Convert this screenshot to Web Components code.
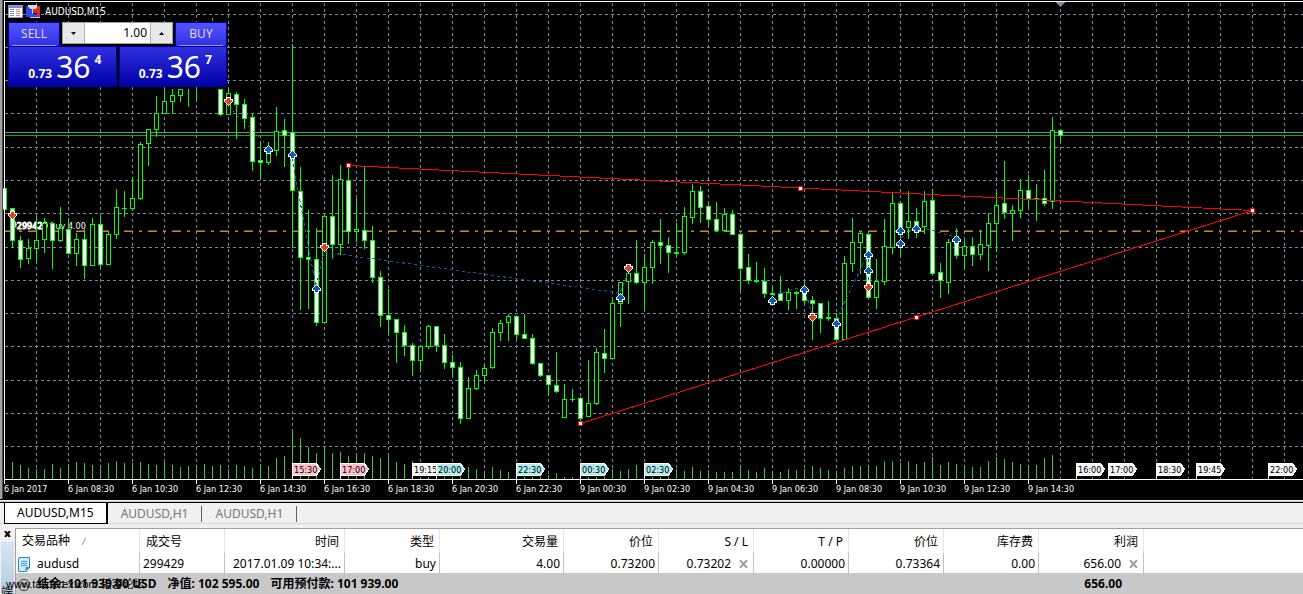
<!DOCTYPE html>
<html lang="zh-CN">
<head>
<meta charset="utf-8">
<title>AUDUSD,M15</title>
<style>
  html, body { margin: 0; height: 100%; }
  body { overflow: hidden; background: #f0f0f0; font: 12px/16px "Noto Sans", "Noto Sans CJK SC", sans-serif; color: #000; }
</style>
</head>
<body>
<trading-app></trading-app>
<script>
const DASH = '3 3';
const px = n => n + 0.5;

/* x, high, body top, body bottom, low, kind: w = filled, h = hollow, d = doji, l = wick only */
const CANDLES = `4 188 188 209 209 w|12 208 208 240 247 w|20 236 240 259 267 w|28 239 248 258 263 h|36 216 240 248 262 h|44 218 223 239 252 h|52 222 223 240 268 w|60 207 228 240 241 h|68 218 229 253 253 w|76 233 239 253 265 h|84 229 239 265 278 w|92 218 224 265 265 h|100 216 224 264 266 w|108 231 234 264 264 h|116 189 207 234 238 h|124 191 208 208 216 d|132 177 198 208 210 h|140 142 144 198 199 h|148 129 129 143 165 h|156 96 113 129 136 h|164 89 101 113 113 h|172 89 95 101 113 h|180 89 89 95 101 h|188 89 89 89 106 l|196 89 89 89 100 l|212 18 18 18 20 l|220 89 89 114 115 w|228 89 93 114 114 h|236 92 94 104 138 w|244 99 104 118 128 w|252 113 117 161 170 w|260 141 160 162 178 w|268 142 150 162 164 h|276 107 131 150 155 h|284 119 130 135 166 w|292 44 132 190 247 w|300 167 191 257 309 w|308 210 257 259 308 w|316 228 259 322 325 w|324 214 216 322 322 h|332 175 216 244 258 w|340 165 179 244 254 h|348 168 180 231 243 w|356 198 229 231 241 h|364 167 230 240 248 w|372 226 240 277 282 w|380 271 277 315 326 w|388 289 315 319 334 w|396 319 319 332 362 w|404 325 332 345 355 w|412 343 345 360 375 w|420 345 346 360 371 h|428 325 326 346 348 h|436 326 326 345 351 w|444 334 345 362 368 w|452 355 362 367 375 w|460 362 367 418 423 w|468 377 388 418 418 h|476 370 375 388 389 h|484 364 368 375 381 h|492 328 332 367 368 h|500 320 323 332 340 h|508 314 316 322 340 h|516 316 316 334 338 w|524 314 334 338 338 w|532 334 338 363 364 w|540 363 363 375 376 w|548 375 375 384 395 w|556 352 385 391 392 w|564 384 399 417 417 h|572 389 399 399 401 d|580 397 398 418 421 w|588 360 403 416 416 h|596 348 352 403 404 h|604 329 353 358 372 w|612 299 303 358 358 h|620 282 282 303 326 h|628 273 273 281 303 h|636 240 273 282 283 w|644 254 267 282 309 h|652 240 242 267 283 h|660 219 242 245 263 w|668 237 245 252 272 w|676 223 252 253 255 d|684 207 216 252 254 h|692 184 191 217 223 h|700 186 191 207 222 w|708 203 206 219 225 w|716 202 219 230 231 w|724 208 214 230 231 h|732 210 214 234 234 w|740 234 234 268 290 w|748 254 267 280 283 w|756 262 280 281 282 d|764 268 281 293 297 w|772 287 293 294 298 d|780 276 293 300 300 w|788 288 292 300 309 h|796 291 292 293 308 d|804 282 291 300 303 w|812 296 300 303 339 w|820 303 303 318 332 w|828 301 317 318 320 d|836 313 318 339 341 w|844 256 263 339 339 h|852 218 242 263 271 h|860 231 233 242 273 h|868 233 234 297 297 w|876 259 281 297 308 h|884 219 246 281 284 h|892 193 203 247 253 h|900 201 203 228 255 w|908 191 221 227 238 h|916 208 221 228 237 w|924 191 201 226 233 h|932 189 200 273 273 w|940 263 272 280 297 w|948 239 242 282 293 h|956 228 236 255 258 w|964 239 246 255 268 h|972 237 246 254 265 w|980 230 244 254 259 h|988 213 223 245 270 h|996 192 205 223 251 h|1004 161 203 212 218 w|1012 205 210 213 240 h|1020 179 190 210 217 h|1028 175 190 198 206 w|1036 184 198 198 220 d|1044 170 198 203 205 w|1052 117 130 201 208 h|1060 130 130 135 141 w`
  .split('|').map(r => r.split(' '));

/* tick volumes: the top of each bar, one every 8px from x = 12 */
const VOLUMES = [462,465,468,469,469,464,468,464,462,463,465,468,463,461,463,463,462,464,465,462,465,467,466,465,464,466,465,469,465,466,468,464,466,458,456,432,438,447,453,447,453,452,456,456,453,456,458,456,462,464,461,477,477,477,477,477,477,467,469,473,467,470,472,477,477,477,477,475,473,477,477,477,477,477,477,469,471,469,465,477,477,477,477,469,471,467,471,470,472,472,472,468,470,472,468,472,472,469,470,469,466,468,470,471,468,466,466,465,466,461,461,463,461,464,462,457,465,462,464,467,467,467,461,457,459,462,464,465,465,458,455,478];

const H_GRID = [14,47,80,113,147,180,213,247,280,313,346,380,413,446];
const TIMES = ['6 Jan 2017','6 Jan 08:30','6 Jan 10:30','6 Jan 12:30','6 Jan 14:30','6 Jan 16:30','6 Jan 18:30','6 Jan 20:30','6 Jan 22:30','9 Jan 00:30','9 Jan 02:30','9 Jan 04:30','9 Jan 06:30','9 Jan 08:30','9 Jan 10:30','9 Jan 12:30','9 Jan 14:30'];
const EVENTS = [[292,'15:30','#ffc0cb'],[340,'17:00','#ffc0cb'],[412,'19:15','#f5f5f5'],[436,'20:00','#afeeee'],[516,'22:30','#afeeee'],[580,'00:30','#afeeee'],[644,'02:30','#afeeee'],[1076,'16:00','#f5f5f5'],[1108,'17:00','#f5f5f5'],[1156,'18:30','#f5f5f5'],[1196,'19:45','#f5f5f5'],[1268,'22:00','#f5f5f5']];
const SELLS = [[12,215],[228,101],[324,247],[628,268],[812,317],[868,287]];
const BUYS = [[268,150],[292,155],[316,289],[620,298],[772,301],[804,290],[836,324],[868,255],[868,271],[900,231],[900,244],[916,229],[956,240]];
const HANDLES = [[348,165],[800,188],[1252,210],[580,423],[916,317]];

class PriceChart extends HTMLElement {
  constructor() {
    super();
    const s = [];
    for (let x = 36; x < 2600; x += 32) s.push(`<path class="grid" d="M${px(x)} 3V479"/>`);
    for (const y of H_GRID) s.push(`<line class="grid" x1="5" x2="100%" y1="${px(y)}" y2="${px(y)}"/>`);
    VOLUMES.forEach((y, i) => s.push(`<rect fill="#32cd32" x="${12 + i * 8}" y="${y}" width="1" height="${479 - y}"/>`));
    s.push(`<rect x="5" y="132" width="100%" height="1" fill="#778899"/><rect x="5" y="135" width="100%" height="1" fill="#00b400"/>`);
    s.push(`<line x1="4" x2="100%" y1="231.5" y2="231.5" stroke="#32cd32" stroke-dasharray="9 6 3 6"/>`);
    s.push(`<line x1="4" x2="100%" y1="230.5" y2="230.5" stroke="#f00" stroke-dasharray="9 6 3 6"/>`);
    s.push(`<text x="10" y="229" fill="#fff"><tspan stroke="#fff" stroke-width="1">#299429</tspan> buy 4.00</text>`);
    for (const [x, hi, top, bot, lo, kind] of CANDLES) {
      const X = +x, T = +top, B = +bot;
      s.push(`<rect x="${X}" y="${hi}" width="1" height="${lo - hi + 1}" fill="#0f0"/>`);
      if (kind === 'l') continue;
      s.push(`<rect x="${X - 2}" y="${T}" width="5" height="${B - T + 1}" fill="#0f0"/>`);
      if (kind !== 'd') s.push(`<rect x="${X - 1}" y="${T + 1}" width="3" height="${B - T - 1}" fill="${kind === 'w' ? '#fff' : '#000'}"/>`);
    }
    s.push(`<g fill="none" stroke="#0a5caf" stroke-dasharray="3 3"><path d="M292 158L316 287L324 252L620 293L628 273M772 296L804 286L812 315M836 320L868 254V285M900 241L900 232M901 238L916 226L956 237"/></g>`);
    s.push(`<path d="M228 106L268 146" fill="none" stroke="#e04020" stroke-dasharray="2 5"/>`);
    s.push(`<path d="M348.5 165.5L1252.5 210.5L580.5 423.5" fill="none" stroke="#f00"/>`);
    for (const [x, y] of SELLS) s.push(`<path transform="translate(${x} ${y})" fill="#e0401c" stroke="#fff" d="M-1.500-3.500H2.500V-1.500H4.500V.500L.500 4.500L-3.500.500V-1.500H-1.500Z"/>`);
    for (const [x, y] of BUYS) s.push(`<path transform="translate(${x} ${y})" fill="#0a5caf" stroke="#fff" d="M-1.500 3.500H2.500V1.500H4.500V-.500L.500-4.500L-3.500-.500V1.500H-1.500Z"/>`);
    for (const [x, y] of HANDLES) s.push(`<rect x="${x - 2}" y="${y - 2}" width="5" height="5" fill="#f00"/><rect x="${x - 1}" y="${y - 1}" width="3" height="3" fill="#fff"/>`);
    for (const [x, t, c] of EVENTS) s.push(`<path fill="#fff" d="M${x} 463H${x + 25}L${x + 29} 469L${x + 25} 476H${x + 1}V479H${x}Z"/><path fill="${c}" d="M${x + 1} 464H${x + 24}L${x + 28} 469L${x + 24} 475H${x + 1}Z"/><text x="${x + 2}" y="473">${t}</text>`);
    s.push(`<path fill="#fff" d="M4 1H5V484H4Z"/><rect fill="#fff" x="4" y="1" width="100%" height="1"/><rect fill="#fff" x="4" y="479" width="100%" height="1"/>`);
    TIMES.forEach((t, i) => s.push(`<rect x="${4 + i * 64}" y="479" width="1" height="5" fill="#fff"/><text x="${4 + i * 64}" y="492" fill="#fff">${t}</text>`));
    s.push(`<path fill="#778899" d="M1056 2H1065L1061 7H1060Z"/>`);
    s.push(`<rect x="8" y="5" width="14" height="12" fill="#fff" stroke="#8c9ccf"/><path d="M8 6.500H22" stroke="#6f8fe0" stroke-width="2"/><path d="M10 9.500H14M10 11.500H14M10 13.500H14M10 15.500H14" stroke="#7d93d8"/><path d="M16 9.500H20M16 11.500H20M16 13.500H20M16 15.500H20" stroke="#e08c78"/>`);
    s.push(`<path d="M26 6H31L32 9V14H37V17H26Z" fill="#2848e8"/><path d="M35 6H40V17H37V13H33V9Z" fill="#d83028"/><path d="M28 5H37V7L35 9H30L28 7Z" fill="#d8d8d8"/><path d="M32.500 8V14M30 17.500H40" stroke="#c8c8d8" fill="none"/>`);
    s.push(`<text x="45" y="15" fill="#fff" style="font-size:10px">AUDUSD,M15</text>`);
    this.attachShadow({ mode: 'open' }).innerHTML = `
      <style>
        :host { display: block; height: 499px; background: #000; border-bottom: 1px solid #000; }
        svg { display: block; width: 100%; height: 100%; shape-rendering: crispEdges; font: 9px "DejaVu Sans Condensed", "Noto Sans", sans-serif; }
        .grid { stroke: #778899; stroke-dasharray: ${DASH}; fill: none; }
      </style>
      <svg role="img" aria-label="AUDUSD M15 chart">${s.join('')}<rect width="2" height="100%" fill="#a0a0a0"/><rect x="2" width="1" height="100%" fill="#505050"/></svg>`;
  }
}
customElements.define('price-chart', PriceChart);

class PriceQuote extends HTMLElement {
  constructor() {
    super();
    this.attachShadow({ mode: 'open' }).innerHTML = `
      <style>
        :host { display: block; }
        button { box-sizing: border-box; display: flex; align-items: baseline; justify-content: center; gap: 4px; width: 100%; height: 41px; padding: 0 0 0 5px; border: 1px solid #0000a0; background: linear-gradient(#3030e0, #0000a8); color: #fff; font: bold 12px/40px "Noto Sans", sans-serif; }
        big { font: 30px/40px "Noto Sans", sans-serif; }
        sup { position: relative; top: -14px; font-size: 12px; line-height: 12px; vertical-align: baseline; }
      </style>
      <button type="button"><slot></slot><big><slot name="pips"></slot></big><sup><slot name="point"></slot></sup></button>`;
  }
}
customElements.define('price-quote', PriceQuote);

class TradePanel extends HTMLElement {
  constructor() {
    super();
    this.attachShadow({ mode: 'open' }).innerHTML = `
      <style>
        :host { display: block; width: 219px; }
        .top { display: grid; grid-template-columns: 52px minmax(0, 1fr) 52px; gap: 2px; height: 24px; background: #000; }
        .side { box-sizing: border-box; height: 24px; padding: 0 3px; border: 1px solid #0000a0; border-bottom: 0; background: linear-gradient(#5454ff, #3030e0); color: #dcdcff; font: 12px/22px "Noto Sans", sans-serif; }
        .side span { display: block; height: 22px; border-bottom: 1px solid #9c9cf4; }
        .lot { box-sizing: border-box; display: flex; height: 22px; border: 1px solid #a0a0a0; background: #fff; }
        .lot button { display: flex; align-items: center; justify-content: center; width: 21px; padding: 0; border: 0; background: #e8e8e8; flex: none; }
        input { flex: 1; min-width: 0; padding: 0 3px; border: solid #b0b0b0; border-width: 0 1px; text-align: right; font: 12px/20px "Noto Sans", sans-serif; outline: 0; }
        .prices { display: grid; grid-template-columns: 1fr 1fr; gap: 2px; background: #000; }
      </style>
      <div class="top">
        <button class="side" type="button"><span>SELL</span></button>
        <div class="lot"><button type="button" aria-label="less"><svg width="5" height="3"><path d="M0 0H5L2.500 3Z"/></svg></button><input aria-label="Volume" value="1.00"><button type="button" aria-label="more"><svg width="5" height="3"><path d="M0 3H5L2.500 0Z"/></svg></button></div>
        <button class="side" type="button"><span>BUY</span></button>
      </div>
      <div class="prices">
        <price-quote>0.73<span slot="pips">36</span><span slot="point">4</span></price-quote>
        <price-quote>0.73<span slot="pips">36</span><span slot="point">7</span></price-quote>
      </div>`;
  }
}
customElements.define('trade-panel', TradePanel);

class ChartTabs extends HTMLElement {
  constructor() {
    super();
    this.attachShadow({ mode: 'open' }).innerHTML = `
      <style>
        :host { display: flex; height: 21px; margin: 2px 0 0; padding-left: 4px; border-top: 1px solid #000; background: #f0f0f0; box-shadow: 0 -1px #c8c8c8, inset 0 -1px #d8d8d8; }
        ::slotted(button) { box-sizing: border-box; height: 16px; margin: 3px 0 0; padding: 0 13px; border: 0; border-right: 1px solid #606060; background: none; color: #787878; font: 12px/16px "Noto Sans", sans-serif; }
        ::slotted(button[aria-selected=true]) { height: 21px; margin: 0; padding: 0 12px; border: 1px solid #000; border-top: 0; border-right-width: 2px; background: #fff; color: #000; line-height: 20px; }
      </style>
      <slot></slot>`;
  }
  connectedCallback() { this.setAttribute('role', 'tablist'); }
}
customElements.define('chart-tabs', ChartTabs);

class TradeTerminal extends HTMLElement {
  constructor() {
    super();
    const X = '<button type="button" aria-label="close"><svg width="9" height="8"><path d="M1 0L8 8M8 0L1 8" stroke="#a0a0a0" stroke-width="2"/></svg></button>';
    this.attachShadow({ mode: 'open' }).innerHTML = `
      <style>
        :host { position: relative; display: flex; flex: 1; min-height: 0; overflow: hidden; margin-top: 4px; }
        aside { box-sizing: border-box; width: 15px; flex: none; display: flex; flex-direction: column; padding: 0 1px; align-items: center; }
        aside button { display: flex; align-items: center; justify-content: center; width: 12px; height: 12px; padding: 0; border: 0; background: none; margin-bottom: 2px; }
        aside div { width: 13px; flex: 1; background: linear-gradient(#d8e6f4, #b4c8dc); overflow: hidden; display: flex; align-items: flex-end; }
        aside b { font: 12px/12px "Noto Sans CJK SC", sans-serif; height: 8px; }
        main { flex: 1; background: #fff; border-top: 1px solid #a0a0a0; border-left: 1px solid #a0a0a0; min-width: 0; overflow: hidden; }
        table { width: 100%; table-layout: fixed; border-collapse: separate; border-spacing: 0; }
        th, td { box-sizing: border-box; padding: 0 3px; text-align: right; white-space: nowrap; overflow: hidden; border-right: 1px solid #c0c0c0; font-weight: 400; }
        th { height: 24px; padding: 1px 5px 0; border-color: #e5e5e5; }
        td { height: 20px; padding-top: 2px; }
        th:last-child, td:last-child { border: 0; }
        .l { text-align: left; padding-left: 6px; }
        td.l { padding-left: 2px; }
        td.l + .l { padding-left: 3px; }
        th i { color: #808080; font-size: 9px; margin-left: 12px; }
        td svg { vertical-align: middle; }
        td button { padding: 0; border: 0; background: none; margin: 0 2px 0 8px; height: 12px; line-height: 0; }
        tfoot td { height: 22px; padding: 0 3px; background: #c8c8c8; border: 0; font-weight: 700; }
        tfoot .sum { padding: 0 0 0 2px; text-align: left; }
        .sum span { margin-right: 11px; }
        .sum svg { margin-right: 7px; }
        tfoot .p { padding-right: 22px; }
        .mark { position: absolute; left: 6px; bottom: 3px; font: 11px/14px "Liberation Sans", "Noto Sans CJK SC", sans-serif; }
      </style>
      <aside><button type="button" aria-label="close panel"><svg width="7" height="6"><path d="M1 0L6 6M6 0L1 6" stroke="#000" stroke-width="2"/></svg></button><div><b>端</b></div></aside>
      <main><table>
        <colgroup><col style="width:124px"><col style="width:85px"><col style="width:120px"><col style="width:95px"><col style="width:124px"><col style="width:95px"><col style="width:95px"><col style="width:95px"><col style="width:95px"><col style="width:95px"><col style="width:105px"><col></colgroup>
        <thead><tr><th class="l">交易品种<i>/</i></th><th class="l">成交号</th><th>时间</th><th>类型</th><th>交易量</th><th>价位</th><th>S / L</th><th>T / P</th><th>价位</th><th>库存费</th><th>利润</th><th></th></tr></thead>
        <tbody><tr><td class="l"><svg width="12" height="15" style="margin-right:7px"><path d="M1 .500H11.500V10.500L8.500 14.500H.500V3Z" fill="#cfe8fc" stroke="#2f86c6"/><path d="M3 4.500H9M3 6.500H9M3 8.500H9" stroke="#4b9cdb"/><path d="M7 14L8 10L12 10Z" fill="#2f86c6"/></svg>audusd</td><td class="l">299429</td><td>2017.01.09 10:34:...</td><td>buy</td><td>4.00</td><td>0.73200</td><td>0.73202${X}</td><td>0.00000</td><td>0.73364</td><td>0.00</td><td>656.00${X}</td><td></td></tr></tbody>
        <tfoot><tr><td class="sum" colspan="10"><svg width="12" height="12"><circle cx="6" cy="6" r="5.500" fill="none" stroke="#303030"/><path d="M3 5H9M4 8L6 6L8 8" stroke="#303030" fill="none"/></svg><span>结余: 101 939.00 USD</span><span>净值: 102 595.00</span><span>可用预付款: 101 939.00</span></td><td class="p">656.00</td><td></td></tr></tfoot>
      </table></main>
      <div class="mark">www.talkforex.com 韬客论坛</div>`;
  }
}
customElements.define('trade-terminal', TradeTerminal);

class TradingApp extends HTMLElement {
  constructor() {
    super();
    this.attachShadow({ mode: 'open' }).innerHTML = `
      <style>
        :host { display: flex; flex-direction: column; height: 100vh; }
        section { position: relative; }
        trade-panel { position: absolute; left: 8px; top: 22px; }
      </style>
      <section><price-chart></price-chart><trade-panel></trade-panel></section>
      <chart-tabs><button type="button" role="tab" aria-selected="true">AUDUSD,M15</button><button type="button" role="tab">AUDUSD,H1</button><button type="button" role="tab">AUDUSD,H1</button></chart-tabs>
      <trade-terminal></trade-terminal>`;
  }
}
customElements.define('trading-app', TradingApp);
</script>
</body>
</html>
